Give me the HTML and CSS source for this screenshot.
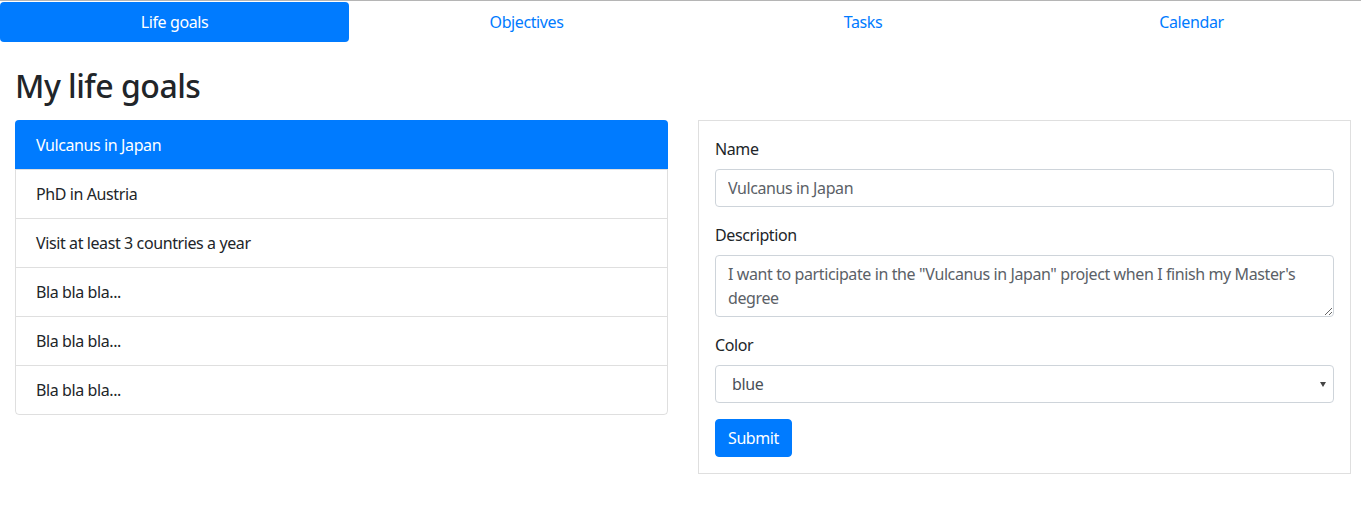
FILE: index.html
```html
<!DOCTYPE html>
<html lang="en">
<head>
<meta charset="utf-8">
<title>My life goals</title>
<link rel="stylesheet" href="styles.css">
</head>
<body>
<nav class="nav">
  <a class="nav-link active" href="#">Life goals</a>
  <a class="nav-link" href="#">Objectives</a>
  <a class="nav-link" href="#">Tasks</a>
  <a class="nav-link" href="#">Calendar</a>
</nav>
<main class="page">
  <h2 class="title">My life goals</h2>
  <div class="row">
    <ul class="list-group">
      <li class="list-item active">Vulcanus in Japan</li>
      <li class="list-item">PhD in Austria</li>
      <li class="list-item">Visit at least 3 countries a year</li>
      <li class="list-item">Bla bla bla...</li>
      <li class="list-item">Bla bla bla...</li>
      <li class="list-item">Bla bla bla...</li>
    </ul>
    <form class="card">
      <div class="form-group">
        <label class="label" for="name">Name</label>
        <input class="control" id="name" type="text" value="Vulcanus in Japan">
      </div>
      <div class="form-group">
        <label class="label" for="desc">Description</label>
        <textarea class="control textarea" id="desc" rows="2">I want to participate in the "Vulcanus in Japan" project when I finish my Master's degree</textarea>
      </div>
      <div class="form-group">
        <label class="label" for="color">Color</label>
        <div class="select-wrap">
          <select class="control select" id="color">
            <option>blue</option>
            <option>red</option>
            <option>green</option>
          </select>
        </div>
      </div>
      <button class="btn" type="button">Submit</button>
    </form>
  </div>
</main>
</body>
</html>
```

FILE: styles.css
```css
* { box-sizing: border-box; }

html, body {
  margin: 0;
  padding: 0;
}

body {
  font-family: "Noto Sans", "Open Sans", sans-serif;
  font-size: 16px;
  line-height: 1.5;
  letter-spacing: -0.4px;
  color: #212529;
  background: #fff;
  border-top: 1px solid #b5b5b5;
  overflow-x: hidden;
}

.nav {
  display: grid;
  grid-template-columns: 349px 355px 318px 1fr;
  margin-top: 1px;
}

.nav-link {
  display: block;
  padding: 8px 16px;
  text-align: center;
  color: #007bff;
  text-decoration: none;
  border-radius: 4px;
  white-space: nowrap;
}

.nav-link.active {
  background: #007bff;
  color: #fff;
}

.page {
  padding: 0 15px;
}

.title {
  margin: 25px 0 15px 0;
  font-size: 32px;
  font-weight: 500;
  line-height: 1.2;
  letter-spacing: -0.5px;
}

.row {
  display: grid;
  grid-template-columns: 653px 653px;
  column-gap: 30px;
  align-items: start;
}

.list-group {
  list-style: none;
  margin: 0;
  padding: 0;
  border: 1px solid rgba(0,0,0,.125);
  border-radius: 4px;
}

.list-item {
  padding: 12px 20px;
  border-top: 1px solid rgba(0,0,0,.125);
}

.list-item:first-child {
  border-top: 0;
}

.list-item.active {
  background: #007bff;
  color: #fff;
  margin: -1px -1px 0 -1px;
  padding: 13px 21px 12px 21px;
  border-radius: 4px 4px 0 0;
}

.card {
  border: 1px solid rgba(0,0,0,.125);
  padding: 16px;
  margin: 0;
}

.form-group {
  margin-bottom: 16px;
}

.label {
  display: block;
  margin-bottom: 8px;
}

.control {
  display: block;
  width: 100%;
  height: 38px;
  padding: 6px 12px;
  font-family: inherit;
  font-size: 16px;
  line-height: 1.5;
  letter-spacing: -0.4px;
  color: #5b6167;
  background: #fff;
  border: 1px solid #ced4da;
  border-radius: 4px;
  margin: 0;
}

.textarea {
  height: 62px;
  resize: vertical;
}

.select-wrap {
  position: relative;
}

.select {
  appearance: none;
  -webkit-appearance: none;
  padding-left: 16px;
  color: #495057;
}

.select-wrap::after {
  content: "";
  position: absolute;
  right: 8px;
  top: 17px;
  border-left: 3px solid transparent;
  border-right: 3px solid transparent;
  border-top: 5px solid #444;
  pointer-events: none;
}

.btn {
  display: inline-block;
  height: 38px;
  padding: 6px 12px;
  font-family: inherit;
  font-size: 16px;
  line-height: 1.5;
  letter-spacing: -0.4px;
  color: #fff;
  background: #007bff;
  border: 1px solid #007bff;
  border-radius: 4px;
}
```
